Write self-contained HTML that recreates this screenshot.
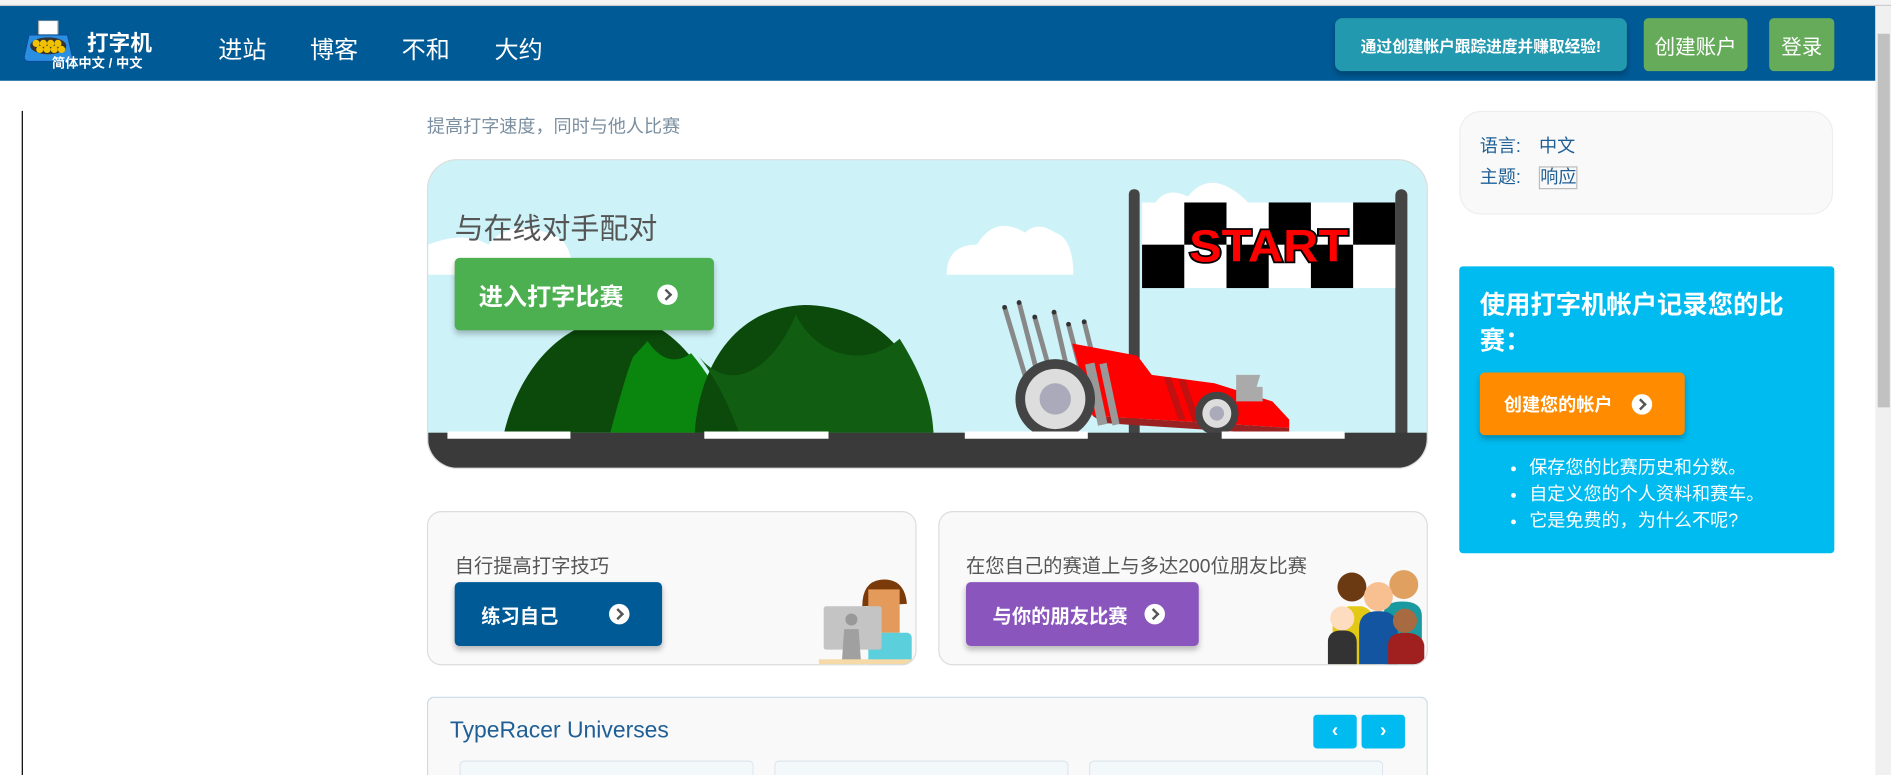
<!DOCTYPE html>
<html><head><meta charset="utf-8"><style>
*{margin:0;padding:0;box-sizing:border-box}
html,body{width:1891px;height:775px;overflow:hidden;background:#fff}
#w{position:absolute;left:0;top:0;width:1568px;height:643px;transform:scale(1.20599,1.2053);transform-origin:0 0;font-family:"Liberation Sans","Noto Sans CJK SC",sans-serif;overflow:hidden}
.a{position:absolute}
.btn{position:absolute;color:#fff;font-weight:bold;border-radius:4px;box-shadow:0 3px 5px rgba(0,0,0,.25);display:flex;align-items:center}
.ci{display:inline-block;width:17px;height:17px;border-radius:50%;background:#fff;position:relative}
.ci:after{content:"";position:absolute;left:4px;top:5px;width:5px;height:5px;border:solid #555;border-width:2.5px 2.5px 0 0;transform:rotate(45deg)}
</style></head><body><div id="w">
<div class="a" style="left:0;top:0;width:1568px;height:5px;background:#f3f3f3;border-bottom:1px solid #ccc"></div>
<div class="a" style="left:0;top:5px;width:1555px;height:62px;background:#005a96"></div>
<div class="a" style="left:1555px;top:5px;width:13px;height:638px;background:#f0f0f0"></div>
<div class="a" style="left:1557px;top:28px;width:10px;height:310px;background:#c1c1c1"></div>
<svg class="a" style="left:18px;top:17px" width="44" height="36" viewBox="0 0 44 36"><rect x="14" y="0" width="16" height="14" fill="#fff" stroke="#aaa"/><path d="M6 12h32l4 18q0 4-4 4H6q-4 0-4-4z" fill="#2a8fe0" stroke="#0a4d99"/><ellipse cx="22" cy="21" rx="15" ry="7" fill="#333"/><g fill="#f2c200"><circle cx="12" cy="19" r="3"/><circle cx="18" cy="19" r="3"/><circle cx="24" cy="19" r="3"/><circle cx="30" cy="19" r="3"/><circle cx="15" cy="24" r="3"/><circle cx="21" cy="24" r="3"/><circle cx="27" cy="24" r="3"/><circle cx="33" cy="24" r="3"/></g></svg>
<div class="a" style="left:72px;top:22px;color:#fff;font-weight:bold;font-size:18px">打字机</div>
<div class="a" style="left:43px;top:44px;color:#fff;font-weight:bold;font-size:11px">简体中文 / 中文</div>
<div class="a" style="left:181px;top:25px;color:#fff;font-size:20px">进站</div>
<div class="a" style="left:257px;top:25px;color:#fff;font-size:20px">博客</div>
<div class="a" style="left:333px;top:25px;color:#fff;font-size:20px">不和</div>
<div class="a" style="left:410px;top:25px;color:#fff;font-size:20px">大约</div>
<div class="btn" style="left:1107px;top:15px;width:242px;height:44px;background:#2399b0;border-radius:6px;justify-content:center;font-size:13px">通过创建帐户跟踪进度并赚取经验!</div>
<div class="btn" style="left:1363px;top:15px;width:86px;height:44px;background:#66ab5a;border-radius:4px;justify-content:center;font-size:17px;font-weight:normal;box-shadow:none">创建账户</div>
<div class="btn" style="left:1467px;top:15px;width:54px;height:44px;background:#66ab5a;border-radius:4px;justify-content:center;font-size:17px;font-weight:normal;box-shadow:none">登录</div>
<div class="a" style="left:18px;top:92px;width:1px;height:551px;background:#000"></div>
<div class="a" style="left:354px;top:94px;color:#7b8fa0;font-size:15px">提高打字速度，同时与他人比赛</div>

<div class="a" style="left:354px;top:132px;width:830px;height:257px;border-radius:25px;overflow:hidden;background:#cdf2f8;border:1px solid #ddd">
<svg width="830" height="257" viewBox="0 0 830 257" style="position:absolute;left:0;top:0">
<path d="M0 70q30-12 50 0q20-25 60-5q10 10 10 30H0z" fill="#fff"/>
<path d="M430 95q0-25 25-25q15-25 40-10q10-10 25 0q15 5 15 35z" fill="#fff"/>
<path d="M600 40q10-20 30-10q20-25 50 5q20 0 20 10H600z" fill="#fff"/>
<path d="M63 226C75 175 110 132 160 130C200 130 235 175 250 226z" fill="#0b4a0b"/>
<path d="M151 226C158 200 165 175 170 163L182 150C192 165 205 170 218 160C235 180 248 205 256 226z" fill="#0a860e"/>
<path d="M221 226C225 170 255 122 312 120C370 120 412 165 419 226z" fill="#0b4a0b"/>
<path d="M224 162C250 195 285 175 305 128C320 160 360 175 391 148C408 175 418 200 419 226H258C248 200 238 180 224 162z" fill="#115e12"/>
<rect x="581" y="24" width="9" height="210" rx="4" fill="#444"/>
<rect x="802" y="24" width="10" height="212" rx="5" fill="#444"/>
<g><rect x="592" y="35" width="210" height="71" fill="#fff"/>
<g fill="#000"><rect x="627" y="35" width="35" height="35"/><rect x="697" y="35" width="35" height="35"/><rect x="767" y="35" width="35" height="35"/><rect x="592" y="70" width="35" height="36"/><rect x="662" y="70" width="35" height="36"/><rect x="732" y="70" width="35" height="36"/></g></g>
<text x="697" y="84" text-anchor="middle" font-family="Liberation Sans" font-weight="bold" font-size="38" fill="#f00" stroke="#000" stroke-width="3" paint-order="stroke" textLength="132" lengthAdjust="spacingAndGlyphs">START</text>
<g stroke="#888" stroke-width="4"><path d="M478 122l18 60M490 118l16 62M503 130l14 50M519 126l12 52M531 136l12 46M544 134l12 48"/></g>
<g fill="#333"><circle cx="478" cy="122" r="2"/><circle cx="490" cy="118" r="2"/><circle cx="503" cy="130" r="2"/><circle cx="519" cy="126" r="2"/><circle cx="531" cy="136" r="2"/><circle cx="544" cy="134" r="2"/></g>
<path d="M534 152L588 162L600 178L652 185L700 200L714 215L714 222L551 212z" fill="#f00"/>
<path d="M551 212L714 222L714 228L560 218z" fill="#992222"/>
<g fill="#c01010"><path d="M610 180l6 0 12 35h-6z"/><path d="M622 182l6 0 12 35h-6z"/></g>
<path d="M670 178h20l-3 10h5v12h-22z" fill="#aaa"/>
<rect x="550" y="168" width="8" height="52" fill="#999" transform="rotate(-12 554 194)"/>
<rect x="562" y="168" width="6" height="52" fill="#999" transform="rotate(-12 565 194)"/>
<circle cx="520" cy="198" r="33" fill="#444"/><circle cx="520" cy="198" r="25" fill="#ddd"/><circle cx="520" cy="198" r="13" fill="#aab"/>
<circle cx="654" cy="210" r="18" fill="#444"/><circle cx="654" cy="210" r="12" fill="#ddd"/><circle cx="654" cy="210" r="6" fill="#aab"/>
<rect x="0" y="226" width="830" height="31" fill="#3a3a3a"/>
<g fill="#fff"><rect x="16" y="225" width="102" height="6"/><rect x="229" y="225" width="103" height="6"/><rect x="445" y="225" width="102" height="6"/><rect x="658" y="225" width="102" height="6"/></g>
</svg>
<div class="a" style="left:22px;top:37px;font-size:24px;color:#555">与在线对手配对</div>
<div class="btn" style="left:22px;top:81px;width:215px;height:60px;background:#4caf50;font-size:20px;padding-left:20px">进入打字比赛<span class="ci" style="margin-left:28px"></span></div>
</div>

<div class="a" style="left:1210px;top:92px;width:310px;height:86px;background:#f9f9f9;border:1px solid #eee;border-radius:18px"></div>
<div class="a" style="left:1227px;top:110px;font-size:15px;color:#1f5f96">语言:　中文</div>
<div class="a" style="left:1227px;top:136px;font-size:15px;color:#1f5f96">主题:　<span style="border:1px solid #bbb">响应</span></div>

<div class="a" style="left:1210px;top:221px;width:311px;height:238px;background:#00bbf0;border-radius:3px"></div>
<div class="a" style="left:1227px;top:239px;width:285px;color:#fff;font-weight:bold;font-size:21px;line-height:30px">使用打字机帐户记录您的比赛：</div>
<div class="btn" style="left:1227px;top:309px;width:170px;height:52px;background:#ff8c00;font-size:15px;padding-left:20px">创建您的帐户<span class="ci" style="margin-left:16px"></span></div>
<ul class="a" style="left:1268px;top:378px;color:#fff;font-size:15px;line-height:22px">
<li>保存您的比赛历史和分数。</li><li>自定义您的个人资料和赛车。</li><li>它是免费的，为什么不呢?</li></ul>

<div class="a" style="left:354px;top:424px;width:406px;height:128px;background:#f9f9f9;border:1px solid #ddd;border-radius:12px;overflow:hidden">
<div class="a" style="left:22px;top:31px;font-size:16px;color:#555">自行提高打字技巧</div>
<div class="btn" style="left:22px;top:58px;width:172px;height:53px;background:#005a96;font-size:16px;padding-left:22px">练习自己<span class="ci" style="margin-left:42px"></span></div>
<svg class="a" style="left:320px;top:52px" width="86" height="76"><path d="M40 26q0-20 15-22q20-2 22 20z" fill="#7a3a0a"/><rect x="45" y="12" width="26" height="36" fill="#e39a5a"/><rect x="45" y="48" width="36" height="28" rx="4" fill="#5bd0dc"/><rect x="8" y="26" width="48" height="36" rx="2" fill="#c4c4c4"/><circle cx="31" cy="37" r="5" fill="#999"/><path d="M25 45h12l2 28H23z" fill="#a0a0a0"/><rect x="4" y="70" width="82" height="6" fill="#f5d9a6"/></svg>
</div>
<div class="a" style="left:778px;top:424px;width:406px;height:128px;background:#f9f9f9;border:1px solid #ddd;border-radius:12px;overflow:hidden">
<div class="a" style="left:22px;top:31px;font-size:16px;color:#555">在您自己的赛道上与多达200位朋友比赛</div>
<div class="btn" style="left:22px;top:58px;width:193px;height:53px;background:#8a55bd;font-size:16px;padding-left:22px">与你的朋友比赛<span class="ci" style="margin-left:14px"></span></div>
<svg class="a" style="left:322px;top:44px" width="84" height="84"><path d="M4 84V50q0-14 14-16h10q10 2 12 16v34z" fill="#e3c913"/><circle cx="20" cy="18" r="12" fill="#6b3a12"/><path d="M46 84V42q0-12 16-12q16 0 16 12v42z" fill="#1a9aa0"/><circle cx="63" cy="16" r="12" fill="#e0a060"/><path d="M26 84V52q0-14 16-14q16 0 16 14v32z" fill="#1355a0"/><circle cx="42" cy="26" r="12" fill="#f8c090"/><path d="M0 84V64q0-10 12-10q12 0 12 10v20z" fill="#333"/><circle cx="12" cy="44" r="10" fill="#fddcc0"/><path d="M50 84V66q0-10 14-10q14 0 16 10v18z" fill="#a02020"/><circle cx="64" cy="46" r="10" fill="#a86a40"/></svg>
</div>

<div class="a" style="left:354px;top:578px;width:830px;height:65px;background:#f9f9f9;border:1px solid #ccdae4;border-bottom:none;border-radius:6px 6px 0 0"></div>
<div class="a" style="left:373px;top:596px;font-size:19px;color:#1f5f96">TypeRacer Universes</div>
<div class="a" style="left:1089px;top:593px;width:36px;height:28px;background:#00bbf0;border-radius:3px;color:#fff;text-align:center;font-size:16px;line-height:27px;font-weight:bold">‹</div>
<div class="a" style="left:1129px;top:593px;width:36px;height:28px;background:#00bbf0;border-radius:3px;color:#fff;text-align:center;font-size:16px;line-height:27px;font-weight:bold">›</div>
<div class="a" style="left:381px;top:631px;width:244px;height:12px;background:#f3f8fb;border:1px solid #dde6ee;border-bottom:none;border-radius:4px 4px 0 0"></div>
<div class="a" style="left:642px;top:631px;width:244px;height:12px;background:#f3f8fb;border:1px solid #dde6ee;border-bottom:none;border-radius:4px 4px 0 0"></div>
<div class="a" style="left:903px;top:631px;width:244px;height:12px;background:#f3f8fb;border:1px solid #dde6ee;border-bottom:none;border-radius:4px 4px 0 0"></div>
</div></body></html>
